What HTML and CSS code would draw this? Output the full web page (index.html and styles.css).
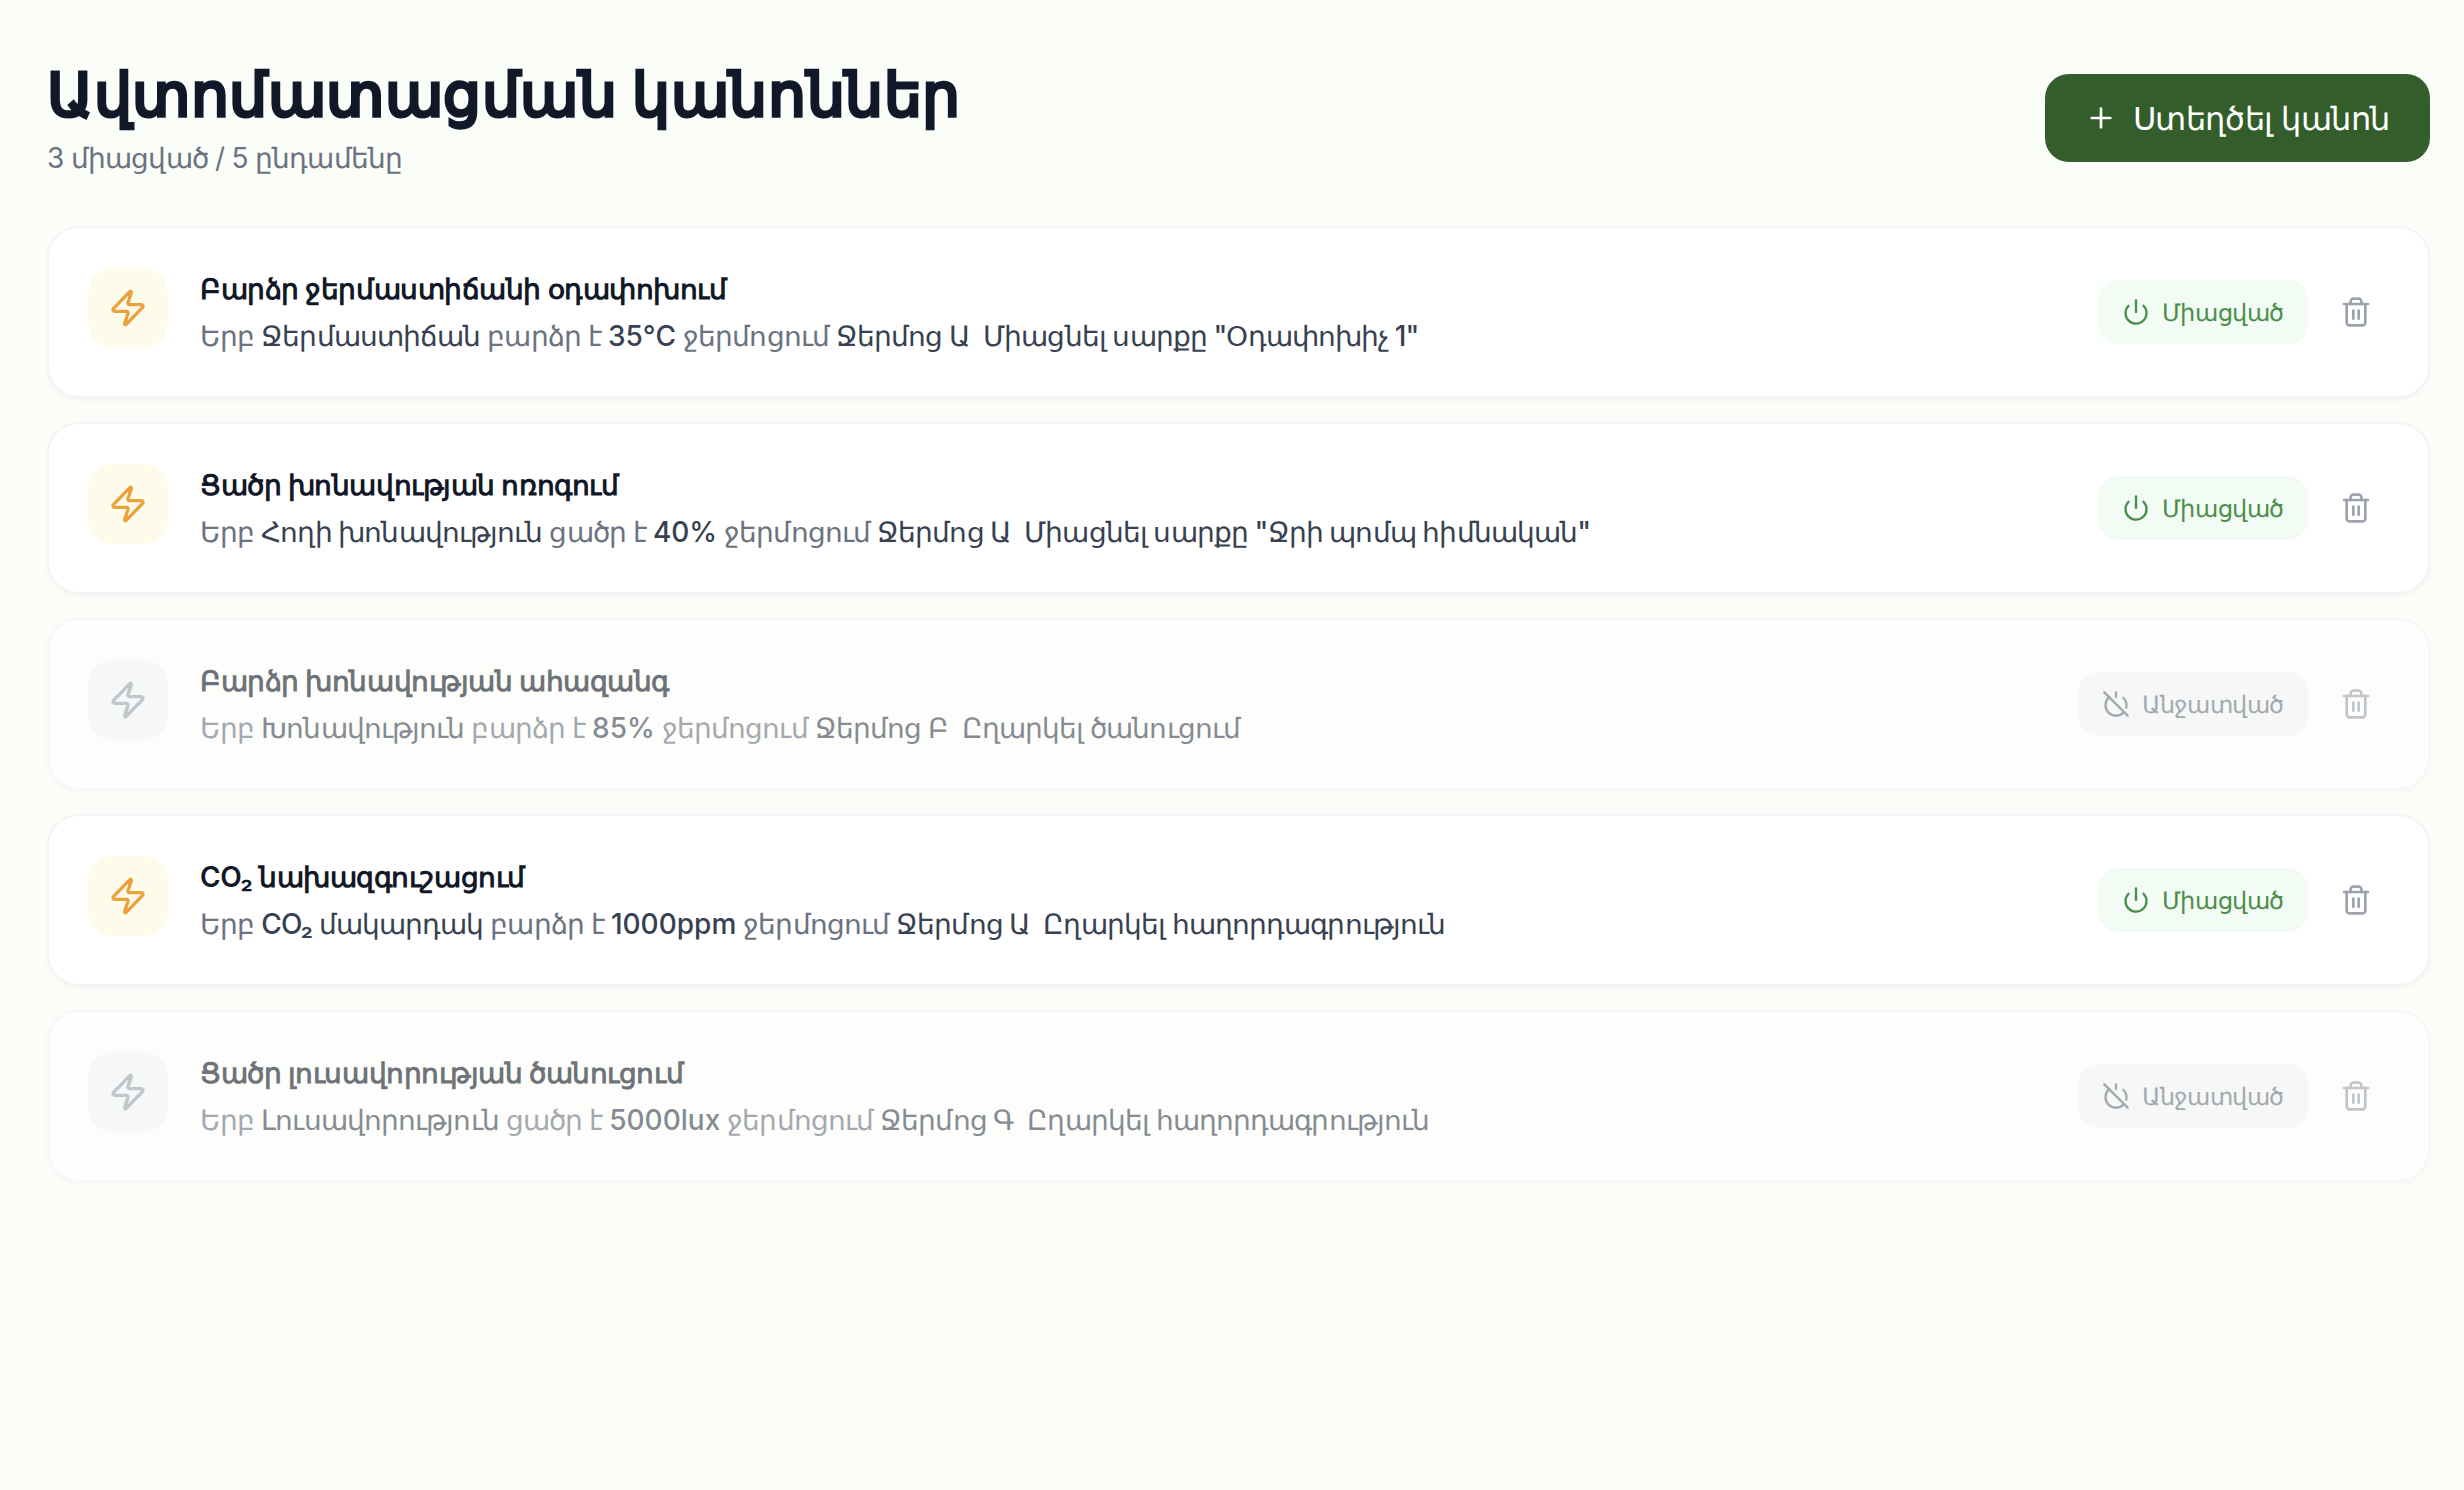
FILE: index.html
```html
<!DOCTYPE html>
<html lang="hy">
<head>
<meta charset="utf-8">
<title>Ավտոմատացման կանոններ</title>
<link rel="stylesheet" href="styles.css">
</head>
<body>
<svg class="sprite" width="0" height="0" aria-hidden="true">
  <symbol id="i-zap" viewBox="0 0 24 24"><path d="M4 14a1 1 0 0 1-.78-1.63l9.9-10.2a.5.5 0 0 1 .86.46l-1.92 6.02A1 1 0 0 0 13 10h7a1 1 0 0 1 .78 1.63l-9.9 10.2a.5.5 0 0 1-.86-.46l1.92-6.02A1 1 0 0 0 11 14z"/></symbol>
  <symbol id="i-power" viewBox="0 0 24 24"><path d="M12 2v10"/><path d="M18.4 6.6a9 9 0 1 1-12.77.04"/></symbol>
  <symbol id="i-power-off" viewBox="0 0 24 24"><path d="M18.36 6.64A9 9 0 0 1 20.77 15"/><path d="M6.16 6.16a9 9 0 1 0 12.68 12.7"/><path d="M12 2v4"/><path d="m2 2 20 20"/></symbol>
  <symbol id="i-trash" viewBox="0 0 24 24"><path d="M3 6h18"/><path d="M19 6v14c0 1-1 2-2 2H7c-1 0-2-1-2-2V6"/><path d="M8 6V4c0-1 1-2 2-2h4c1 0 2 1 2 2v2"/><path d="M10 11v6"/><path d="M14 11v6"/></symbol>
  <symbol id="i-plus" viewBox="0 0 24 24"><path d="M5 12h14"/><path d="M12 5v14"/></symbol>
</svg>
<main class="page">
  <header class="head">
    <div>
      <h1 class="title">Ավտոմատացման կանոններ</h1>
      <p class="sub">3 միացված / 5 ընդամենը</p>
    </div>
    <button class="create"><svg class="ico ico-plus"><use href="#i-plus"/></svg>Ստեղծել կանոն</button>
  </header>
  <section class="list">
    <article class="card">
      <div class="zap"><svg class="ico ico-zap"><use href="#i-zap"/></svg></div>
      <div class="body">
        <h2 class="name">Բարձր ջերմաստիճանի օդափոխում</h2>
        <p class="desc">Երբ <b>Ջերմաստիճան</b> բարձր է <b class="num">35°C</b> ջերմոցում <b>Ջերմոց Ա</b> &nbsp;<b>Միացնել սարքը "Օդափոխիչ 1"</b></p>
      </div>
      <span class="state"><svg class="ico ico-state"><use href="#i-power"/></svg>Միացված</span>
      <svg class="ico ico-trash"><use href="#i-trash"/></svg>
    </article>
    <article class="card">
      <div class="zap"><svg class="ico ico-zap"><use href="#i-zap"/></svg></div>
      <div class="body">
        <h2 class="name">Ցածր խոնավության ոռոգում</h2>
        <p class="desc">Երբ <b>Հողի խոնավություն</b> ցածր է <b class="num">40%</b> ջերմոցում <b>Ջերմոց Ա</b> &nbsp;<b>Միացնել սարքը "Ջրի պոմպ հիմնական"</b></p>
      </div>
      <span class="state"><svg class="ico ico-state"><use href="#i-power"/></svg>Միացված</span>
      <svg class="ico ico-trash"><use href="#i-trash"/></svg>
    </article>
    <article class="card off">
      <div class="zap"><svg class="ico ico-zap"><use href="#i-zap"/></svg></div>
      <div class="body">
        <h2 class="name">Բարձր խոնավության ահազանգ</h2>
        <p class="desc">Երբ <b>Խոնավություն</b> բարձր է <b class="num">85%</b> ջերմոցում <b>Ջերմոց Բ</b> &nbsp;<b>Ըղարկել ծանուցում</b></p>
      </div>
      <span class="state"><svg class="ico ico-state"><use href="#i-power-off"/></svg>Անջատված</span>
      <svg class="ico ico-trash"><use href="#i-trash"/></svg>
    </article>
    <article class="card">
      <div class="zap"><svg class="ico ico-zap"><use href="#i-zap"/></svg></div>
      <div class="body">
        <h2 class="name">CO₂ նախազգուշացում</h2>
        <p class="desc">Երբ <b>CO₂ մակարդակ</b> բարձր է <b class="num">1000ppm</b> ջերմոցում <b>Ջերմոց Ա</b> &nbsp;<b>Ըղարկել հաղորդագրություն</b></p>
      </div>
      <span class="state"><svg class="ico ico-state"><use href="#i-power"/></svg>Միացված</span>
      <svg class="ico ico-trash"><use href="#i-trash"/></svg>
    </article>
    <article class="card off">
      <div class="zap"><svg class="ico ico-zap"><use href="#i-zap"/></svg></div>
      <div class="body">
        <h2 class="name">Ցածր լուսավորության ծանուցում</h2>
        <p class="desc">Երբ <b>Լուսավորություն</b> ցածր է <b class="num">5000lux</b> ջերմոցում <b>Ջերմոց Գ</b> &nbsp;<b>Ըղարկել հաղորդագրություն</b></p>
      </div>
      <span class="state"><svg class="ico ico-state"><use href="#i-power-off"/></svg>Անջատված</span>
      <svg class="ico ico-trash"><use href="#i-trash"/></svg>
    </article>
  </section>
</main>
</body>
</html>
```

FILE: styles.css
```css
* { box-sizing: border-box; }
html, body { margin: 0; height: 100%; }
body {
  background: #fbfdf9;
  font-family: Inter, sans-serif;
  color: #111827;
}
.sprite { position: absolute; }
.ico {
  fill: none;
  stroke: currentColor;
  stroke-width: 2;
  stroke-linecap: round;
  stroke-linejoin: round;
  flex: none;
}
.page { padding: 58px 34px 0 47px; }
.head {
  display: flex;
  justify-content: space-between;
  align-items: center;
  margin-bottom: 48px;
}
.title {
  margin: 0 0 8px;
  font-family: Inter, sans-serif;
  font-size: 60px;
  line-height: 72px;
  font-weight: 700;
  letter-spacing: .55px;
  -webkit-text-stroke: 1.5px #111827;
  color: #111827;
}
.sub {
  margin: 0;
  font-size: 28px;
  line-height: 40px;
  letter-spacing: -.8px;
  color: #6b7280;
}
.create {
  display: flex;
  align-items: center;
  gap: 16px;
  height: 88px;
  padding: 0 40px;
  border: 0;
  border-radius: 24px;
  background: #335d2a;
  color: #fff;
  font: 500 32px Inter, sans-serif;
  letter-spacing: -.4px;
}
.ico-plus { width: 32px; height: 32px; }
.list { display: flex; flex-direction: column; gap: 24px; }
.card {
  display: flex;
  align-items: center;
  height: 172px;
  padding: 0 40px 0 39px;
  background: #fff;
  border: 2px solid #f3f4f6;
  border-radius: 32px;
  box-shadow: 0 2px 4px rgba(0,0,0,.04);
}
.zap {
  display: flex;
  align-items: center;
  justify-content: center;
  align-self: flex-start;
  margin-top: 40px;
  width: 80px;
  height: 80px;
  border-radius: 24px;
  background: #fffbeb;
  color: #e9a23b;
  margin-right: 32px;
}
.ico-zap { width: 40px; height: 40px; }
.body { flex: 1; min-width: 0; }
.name {
  margin: 0 0 7px;
  font-size: 28px;
  line-height: 40px;
  font-weight: 600;
  letter-spacing: -.45px;
  color: #111827;
}
.desc {
  margin: 0;
  font-size: 28px;
  line-height: 40px;
  letter-spacing: -.9px;
  color: #6b7280;
}
.desc b { font-weight: 500; color: #374151; }
.desc .num { letter-spacing: 0; }
.state {
  display: flex;
  align-items: center;
  gap: 12px;
  height: 64px;
  padding: 0 24px;
  border-radius: 20px;
  background: #f2fbf4;
  color: #4a8f4a;
  font-size: 24px;
  font-weight: 500;
  letter-spacing: -.4px;
  margin-right: 32px;
}
.ico-state { width: 28px; height: 28px; }
.ico-trash { width: 32px; height: 32px; color: #9ca3af; margin-right: 16px; }
.off { opacity: .6; }
.off .zap { background: #f3f4f6; color: #9ca3af; }
.off .state { background: #f3f4f6; color: #6b7280; }
```
